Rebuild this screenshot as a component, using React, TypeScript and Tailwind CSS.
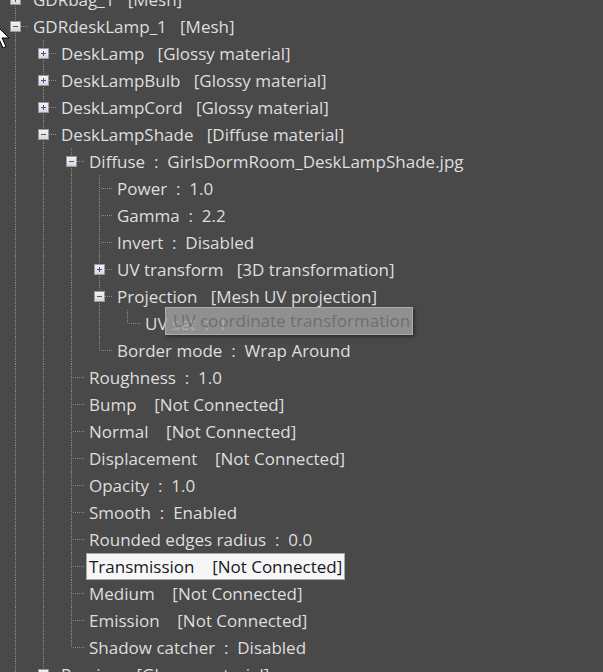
import React from "react";

type T = { label: string; exp?: "+" | "-"; sel?: boolean; children?: T[] };

const tree: T[] = [
  { label: "GDRbag_1   [Mesh]", exp: "+" },
  {
    label: "GDRdeskLamp_1   [Mesh]",
    exp: "-",
    children: [
      { label: "DeskLamp   [Glossy material]", exp: "+" },
      { label: "DeskLampBulb   [Glossy material]", exp: "+" },
      { label: "DeskLampCord   [Glossy material]", exp: "+" },
      {
        label: "DeskLampShade   [Diffuse material]",
        exp: "-",
        children: [
          {
            label: "Diffuse  :  GirlsDormRoom_DeskLampShade.jpg",
            exp: "-",
            children: [
              { label: "Power  :  1.0" },
              { label: "Gamma  :  2.2" },
              { label: "Invert  :  Disabled" },
              { label: "UV transform   [3D transformation]", exp: "+" },
              {
                label: "Projection   [Mesh UV projection]",
                exp: "-",
                children: [{ label: "UV set  :  1" }],
              },
              { label: "Border mode  :  Wrap Around" },
            ],
          },
          { label: "Roughness  :  1.0" },
          { label: "Bump    [Not Connected]" },
          { label: "Normal    [Not Connected]" },
          { label: "Displacement    [Not Connected]" },
          { label: "Opacity  :  1.0" },
          { label: "Smooth  :  Enabled" },
          { label: "Rounded edges radius  :  0.0" },
          { label: "Transmission    [Not Connected]", sel: true },
          { label: "Medium    [Not Connected]" },
          { label: "Emission    [Not Connected]" },
          { label: "Shadow catcher  :  Disabled" },
        ],
      },
      { label: "Preview   [Glossy material]", exp: "+" },
    ],
  },
  { label: "GDRother   [Mesh]", exp: "+" },
];

type Row = { d: number; label: string; exp?: "+" | "-"; sel?: boolean; anc: boolean[]; hasNext: boolean };

function flatten(nodes: T[], d: number, anc: boolean[], out: Row[]) {
  nodes.forEach((n, i) => {
    const hasNext = i < nodes.length - 1;
    out.push({ d, label: n.label, exp: n.exp, sel: n.sel, anc, hasNext });
    if (n.children) flatten(n.children, d + 1, [...anc, hasNext], out);
  });
}

const rows: Row[] = [];
flatten(tree, 0, [], rows);

const LINE = "#8a8a8a";

function Cell({ kind, hasNext, exp }: { kind: "pass" | "empty" | "own"; hasNext?: boolean; exp?: "+" | "-" }) {
  return (
    <svg width={28} height={27} className="shrink-0 block">
      {kind === "pass" && <line x1={14.5} y1={0} x2={14.5} y2={27} stroke={LINE} strokeDasharray="1 1" />}
      {kind === "own" && (
        <>
          <line x1={14.5} y1={0} x2={14.5} y2={hasNext ? 27 : 14} stroke={LINE} strokeDasharray="1 1" />
          <line x1={16} y1={13.5} x2={28} y2={13.5} stroke={LINE} strokeDasharray="1 1" />
          {exp && (
            <>
              <defs>
                <linearGradient id="bx" x1="0" y1="0" x2="0" y2="1">
                  <stop offset="0" stopColor="#f4f4f4" />
                  <stop offset="1" stopColor="#d6d6d6" />
                </linearGradient>
              </defs>
              <rect x={9.5} y={8.5} width={10} height={10} fill="url(#bx)" stroke="#9a9a9a" />
              <line x1={12} y1={13.5} x2={17} y2={13.5} stroke="#3b56a8" strokeWidth={1} />
              {exp === "+" && <line x1={14.5} y1={11} x2={14.5} y2={16} stroke="#3b56a8" strokeWidth={1} />}
            </>
          )}
        </>
      )}
    </svg>
  );
}

export default function App() {
  return (
    <div
      className="relative w-[603px] h-[672px] overflow-hidden bg-[#494949]"
      style={{ fontFamily: '"Open Sans", "Noto Sans", sans-serif' }}
    >
      <div className="flex flex-col -mt-[14px] pl-[1px]">
        {rows.map((r, i) => (
          <div key={i} className="flex h-[27px] items-center">
            {r.anc.map((a, l) => (
              <Cell key={l} kind={a ? "pass" : "empty"} />
            ))}
            <Cell kind="own" hasNext={r.hasNext} exp={r.exp} />
            {r.sel ? (
              <span className="ml-[1px] h-[27px] flex items-center px-[2px] border border-[#a8a8a8] bg-[#f6f6f6] text-[17px] text-[#161624] whitespace-pre">
                {r.label}
              </span>
            ) : (
              <span className="ml-[4px] text-[17px] text-[#dedede] whitespace-pre">{r.label}</span>
            )}
          </div>
        ))}
      </div>

      {/* tooltip */}
      <div className="absolute left-[165px] top-[307px] w-[248px] h-[28px] flex items-center pl-[7px] bg-[#a3a3a3]/80 border border-[#b4b4b4]/80 shadow-[2px_2px_3px_rgba(0,0,0,0.35)] text-[17px] text-[#5e5e5e]/70 whitespace-pre overflow-hidden">
        UV coordinate transformation
      </div>

      {/* mouse cursor */}
      <svg className="absolute left-[-7px] top-[22px]" width={22} height={30} viewBox="0 0 22 30">
        <path d="M1 1 L1 22 L6 17 L10 26 L13 24.5 L9 16 L16 16 Z" fill="#ffffff" stroke="#000000" strokeWidth={1} strokeLinejoin="round" />
      </svg>
    </div>
  );
}
